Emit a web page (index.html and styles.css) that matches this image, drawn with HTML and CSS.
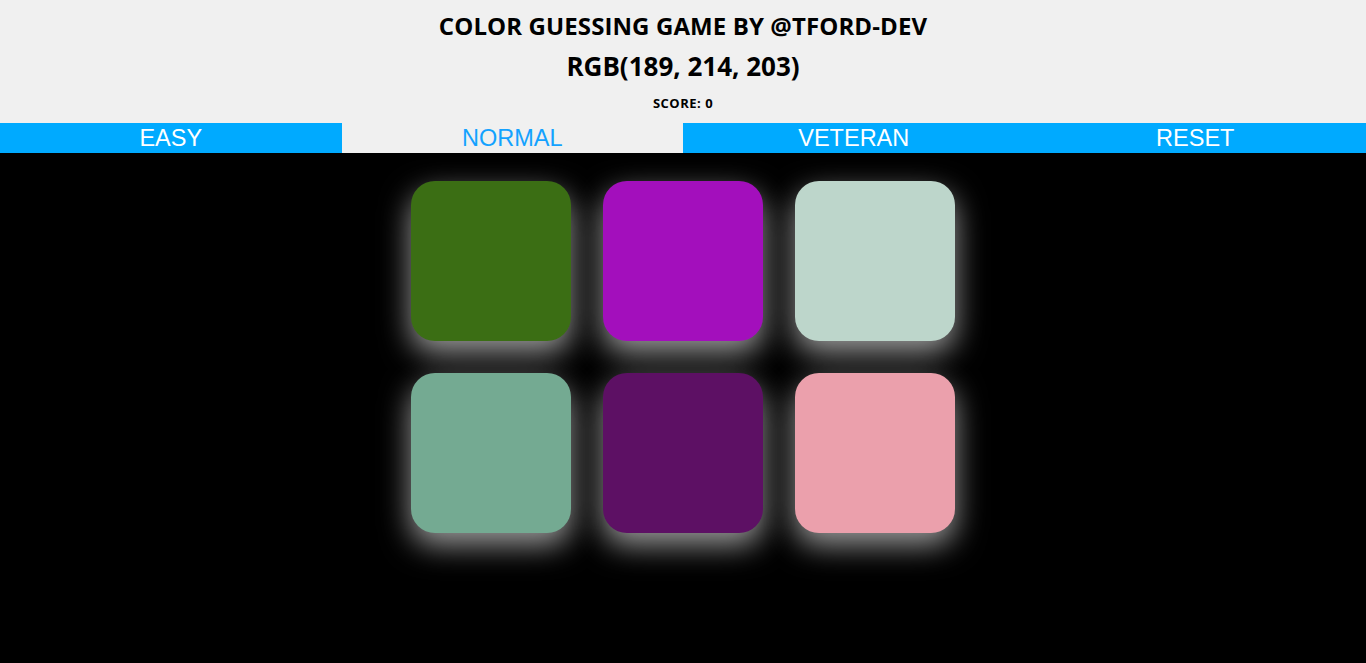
FILE: index.html
```html
<!DOCTYPE html>
<html lang="en">
<head>
<meta charset="utf-8">
<title>Color Guessing Game</title>
<link rel="stylesheet" href="styles.css">
</head>
<body>
<header class="header">
  <h1 class="title">COLOR GUESSING GAME BY @TFORD-DEV</h1>
  <h2 class="rgb">RGB(189, 214, 203)</h2>
  <p class="score">SCORE: 0</p>
</header>
<nav class="nav">
  <button class="btn">EASY</button>
  <button class="btn selected">NORMAL</button>
  <button class="btn">VETERAN</button>
  <button class="btn">RESET</button>
</nav>
<main class="board">
  <div class="grid">
    <div class="square" style="background:#3b6e14"></div>
    <div class="square" style="background:#a30fbc"></div>
    <div class="square" style="background:#bdd6cb"></div>
    <div class="square" style="background:#74aa92"></div>
    <div class="square" style="background:#5d1064"></div>
    <div class="square" style="background:#eba0ac"></div>
  </div>
</main>
</body>
</html>
```
FILE: styles.css
```css
html, body {
  margin: 0;
  padding: 0;
  background: #000;
  height: 100%;
}
body {
  font-family: "Open Sans", "Noto Sans", sans-serif;
}
.header {
  background: #f0f0f0;
  text-align: center;
  padding: 10px 0 8px;
  color: #000;
}
.title {
  margin: 0;
  font-size: 24px;
  font-weight: 700;
  letter-spacing: 0.1px;
  line-height: 31px;
}
.rgb {
  margin: 0;
  font-size: 26px;
  font-weight: 700;
  line-height: 50px;
}
.score {
  margin: 0;
  font-size: 13px;
  font-weight: 700;
  letter-spacing: 0.5px;
  line-height: 24px;
}
.nav {
  display: grid;
  grid-template-columns: repeat(4, 1fr);
  height: 30px;
}
.btn {
  border: 0;
  margin: 0;
  padding: 0;
  background: #00aaff;
  color: #fff;
  font-family: "Liberation Sans", Arial, sans-serif;
  font-size: 23.5px;
  line-height: 30px;
  height: 30px;
  text-transform: uppercase;
}
.btn.selected {
  background: #f0f0f0;
  color: #14a2ff;
}
.board {
  display: flex;
  justify-content: center;
  padding-top: 28px;
}
.grid {
  display: grid;
  grid-template-columns: repeat(3, 160px);
  grid-auto-rows: 160px;
  gap: 32px;
}
.square {
  border-radius: 24px;
  box-shadow: 0 12px 30px rgba(255, 255, 255, 0.6);
}
```
